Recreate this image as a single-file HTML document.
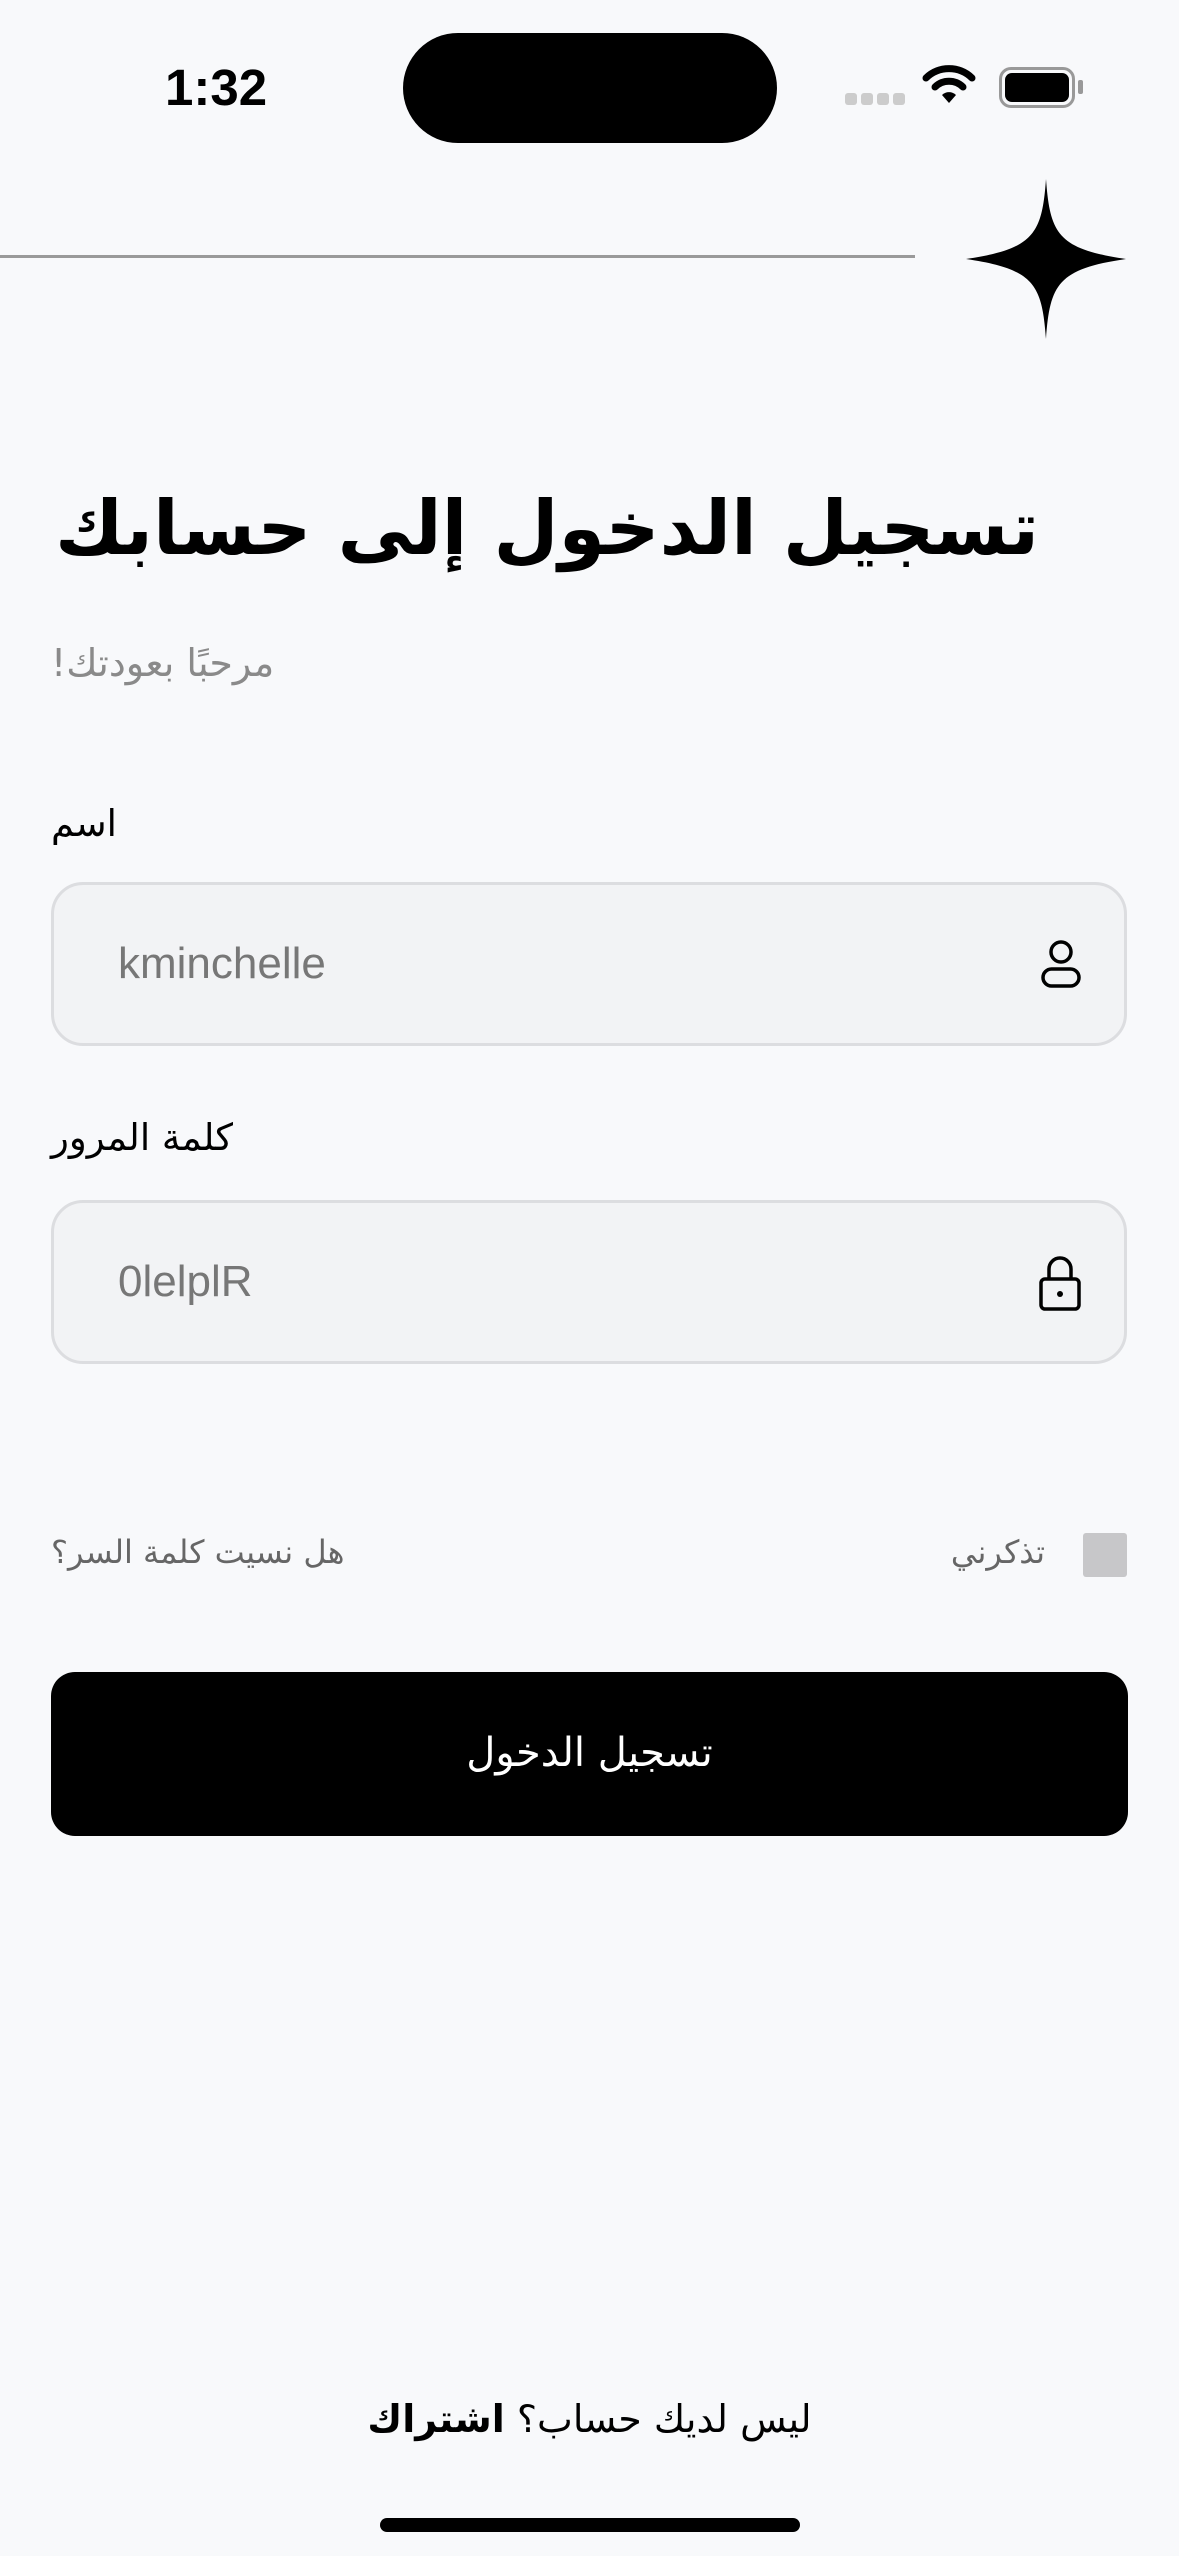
<!DOCTYPE html>
<html lang="ar"><head><meta charset="utf-8">
<style>
*{margin:0;padding:0;box-sizing:border-box}
body{width:1179px;height:2556px;background:#f8f9fb;position:relative;overflow:hidden;font-family:"Liberation Sans","Noto Sans CJK SC",sans-serif}
.a{position:absolute}
.ar{font-family:"DejaVu Sans","Liberation Sans",sans-serif}
.field{position:absolute;left:51px;width:1076px;height:164px;background:#f2f3f5;border:3px solid #dcdde0;border-radius:32px}
.field span{position:absolute;left:64px;top:50%;transform:translateY(-50%);font-size:44px;color:#777}
</style></head><body>
<div class="a" style="left:165px;top:58px;font-size:51px;font-weight:bold;color:#000">1:32</div>
<div class="a" style="left:403px;top:33px;width:374px;height:110px;border-radius:55px;background:#000"></div>
<div class="a" style="left:845px;top:93px;width:60px;height:12px;display:flex;gap:4px"><i style="width:12px;height:12px;background:#ccc;border-radius:3px"></i><i style="width:12px;height:12px;background:#ccc;border-radius:3px"></i><i style="width:12px;height:12px;background:#ccc;border-radius:3px"></i><i style="width:12px;height:12px;background:#ccc;border-radius:3px"></i></div>
<svg class="a" style="left:922px;top:64px" width="54" height="42" viewBox="0 0 54 42"><path d="M4 14a33 33 0 0 1 46 0" stroke="#000" stroke-width="7" fill="none" stroke-linecap="round"/><path d="M13 23a20 20 0 0 1 28 0" stroke="#000" stroke-width="7" fill="none" stroke-linecap="round"/><path d="M20 31l7 8 7-8a10 10 0 0 0-14 0z" fill="#000"/></svg>
<div class="a" style="left:999px;top:67px;width:76px;height:41px;border:3px solid #999;border-radius:12px"></div>
<div class="a" style="left:1005px;top:73px;width:64px;height:29px;background:#000;border-radius:7px"></div>
<div class="a" style="left:1078px;top:80px;width:5px;height:14px;background:#999;border-radius:2px"></div>
<div class="a" style="left:0;top:255px;width:915px;height:3px;background:#9a9a9a"></div>
<svg class="a" style="left:966px;top:179px" width="160" height="160" viewBox="0 0 160 160"><path d="M80 0C84 55 92 70 160 80C92 90 84 105 80 160C76 105 68 90 0 80C68 70 76 55 80 0Z" fill="#000"/></svg>
<div class="a ar" dir="rtl" style="right:140px;top:484px;font-size:75px;font-weight:bold;color:#000;letter-spacing:-1px">تسجيل الدخول إلى حسابك</div>
<div class="a ar" dir="rtl" style="left:51px;top:641px;font-size:38px;color:#8a8a8a">مرحبًا بعودتك!</div>
<div class="a ar" dir="rtl" style="left:51px;top:802px;font-size:37px;color:#000">اسم</div>
<div class="field" style="top:882px"><span>kminchelle</span>
<svg class="a" style="right:42px;top:53px" width="42" height="56" viewBox="0 0 42 56"><circle cx="21" cy="14" r="10" fill="none" stroke="#000" stroke-width="3.5"/><rect x="3" y="31" width="36" height="17" rx="8.5" fill="none" stroke="#000" stroke-width="3.5"/></svg></div>
<div class="a ar" dir="rtl" style="left:51px;top:1116px;font-size:37px;color:#000">كلمة المرور</div>
<div class="field" style="top:1200px"><span>0lelplR</span>
<svg class="a" style="right:42px;top:50px" width="44" height="60" viewBox="0 0 44 60"><path d="M11 26V16a11 11 0 0 1 22 0v10" fill="none" stroke="#000" stroke-width="3.5"/><rect x="3" y="26" width="38" height="30" rx="4" fill="none" stroke="#000" stroke-width="3.5"/><circle cx="22" cy="41" r="3" fill="#000"/></svg></div>
<div class="a ar" dir="rtl" style="left:51px;top:1533px;font-size:32px;color:#666">هل نسيت كلمة السر؟</div>
<div class="a ar" dir="rtl" style="right:134px;top:1533px;font-size:32px;color:#666">تذكرني</div>
<div class="a" style="left:1083px;top:1533px;width:44px;height:44px;background:#c7c7c9;border-radius:3px"></div>
<div class="a" style="left:51px;top:1672px;width:1077px;height:164px;background:#000;border-radius:24px"></div>
<div class="a ar" dir="rtl" style="left:51px;width:1077px;top:1730px;text-align:center;font-size:40px;color:#fff">تسجيل الدخول</div>
<div class="a ar" dir="rtl" style="left:0;width:1179px;top:2397px;text-align:center;font-size:38px;color:#000">ليس لديك حساب؟ <b>اشتراك</b></div>
<div class="a" style="left:380px;top:2518px;width:420px;height:14px;background:#000;border-radius:7px"></div>
</body></html>
